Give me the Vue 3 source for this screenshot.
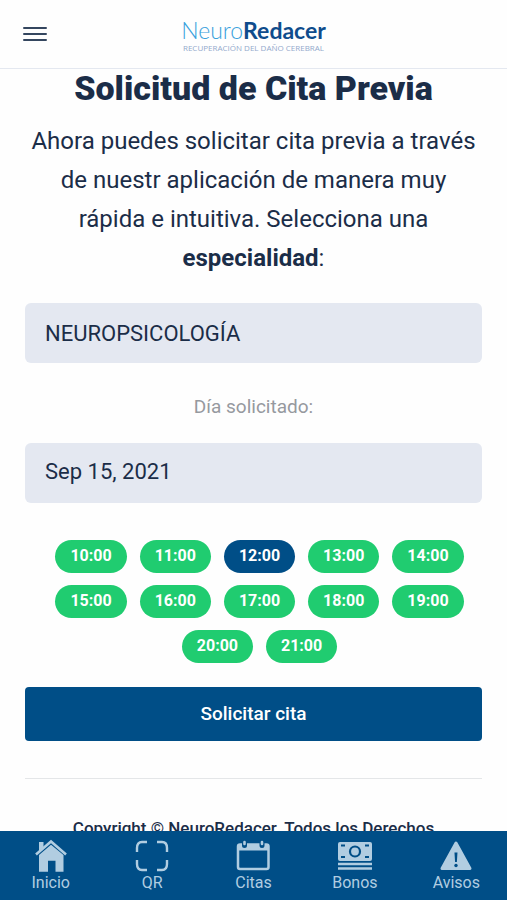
<script setup>
import { ref } from 'vue'

const specialty = ref('NEUROPSICOLOGÍA')
const day = ref('Sep 15, 2021')
const selected = ref('12:00')
const hours = Array.from({ length: 12 }, (_, i) => `${i + 10}:00`)
</script>

<template>
  <div class="app">
    <header class="topbar">
      <button class="menu" type="button" aria-label="Menú">
        <svg width="24" height="16" viewBox="0 0 24 16" aria-hidden="true">
          <path d="M1 2H23M1 8H23M1 14H23" stroke="#34465f" stroke-width="2" stroke-linecap="round" />
        </svg>
      </button>
      <a class="logo" href="#">
        <span class="brand"><span class="brand-light">Neuro</span><span class="brand-bold">Redacer</span></span>
        <span class="tagline">RECUPERACIÓN DEL DAÑO CEREBRAL</span>
      </a>
    </header>

    <main class="content">
      <h1>Solicitud de Cita Previa</h1>
      <p class="intro">
        <label for="specialty">Ahora puedes solicitar cita previa a través de nuestr aplicación de manera muy rápida e intuitiva. Selecciona una <strong>especialidad</strong>:</label>
      </p>
      <select id="specialty" v-model="specialty" class="field">
        <option>NEUROPSICOLOGÍA</option>
      </select>
      <label class="day-label" for="day">Día solicitado:</label>
      <input id="day" v-model="day" class="field date" type="text">
      <div class="hours">
        <button
          v-for="hour in hours"
          :key="hour"
          type="button"
          class="hour"
          :class="{ active: hour === selected }"
          :aria-pressed="hour === selected"
          @click="selected = hour"
        >{{ hour }}</button>
      </div>
      <button class="submit" type="button">Solicitar cita</button>
      <footer class="copyright">Copyright © NeuroRedacer. Todos los Derechos</footer>
    </main>

    <nav class="tabs">
      <a class="tab" href="#">
        <svg viewBox="0 0 34 34" aria-hidden="true">
          <path d="M5 3H9.500V9L5 12.500Z" fill="currentColor" />
          <path d="M2 15.500L17 2.500L32 15.500" fill="none" stroke="currentColor" stroke-width="2.600" />
          <path d="M5 16L17 5.800L29.500 16V32.700H21.500V21.700H14V32.700H5Z" fill="currentColor" />
        </svg>
        <span>Inicio</span>
      </a>
      <a class="tab" href="#">
        <svg viewBox="0 0 34 34" aria-hidden="true">
          <path d="M2 13V9Q2 3 7 3H12M22 3H27Q32 3 32 9V13M32 21V25Q32 31 27 31H22M12 31H7Q2 31 2 25V21" fill="none" stroke="currentColor" stroke-width="2.400" />
        </svg>
        <span>QR</span>
      </a>
      <a class="tab" href="#">
        <svg viewBox="0 0 34 34" aria-hidden="true">
          <rect x="2" y="5.500" width="30.500" height="24.500" rx="2" fill="none" stroke="currentColor" stroke-width="2.500" />
          <path d="M2 5H32V11.500H2Z" fill="currentColor" />
          <path d="M8.500 3V6.500M26 3V6.500" stroke="#004e87" stroke-width="5" stroke-linecap="round" />
          <path d="M8.500 3V5M26 3V5" stroke="currentColor" stroke-width="2.600" stroke-linecap="round" />
        </svg>
        <span>Citas</span>
      </a>
      <a class="tab" href="#">
        <svg viewBox="0 0 34 34" aria-hidden="true">
          <rect x="0" y="3" width="34" height="19" rx="2" fill="currentColor" />
          <path d="M3 6.500H7M27 6.500H31M3 18H7M27 18H31" stroke="#004e87" stroke-width="2" />
          <circle cx="17" cy="12.500" r="5" fill="none" stroke="#004e87" stroke-width="2.200" />
          <path d="M0 25H34M0 29.500H34" stroke="currentColor" stroke-width="2.400" />
        </svg>
        <span>Bonos</span>
      </a>
      <a class="tab" href="#">
        <svg viewBox="0 0 34 34" aria-hidden="true">
          <path d="M17 4L31 29.500H3Z" fill="currentColor" stroke="currentColor" stroke-width="3" stroke-linejoin="round" />
          <path d="M15.500 13.500H18.500L17.900 23H16.100Z" fill="#004e87" />
          <circle cx="17" cy="26.500" r="1.700" fill="#004e87" />
        </svg>
        <span>Avisos</span>
      </a>
    </nav>
  </div>
</template>

<style>
body {
  background: #fefefe;
}
</style>

<style scoped>
.app {
  display: flex;
  flex-direction: column;
  height: 100vh;
  color: #1b2d48;
  font-family: Roboto, sans-serif;
}

button,
select,
input {
  box-sizing: border-box;
  border: 0;
  margin: 0;
  font-family: inherit;
}

.topbar {
  display: grid;
  grid-template-columns: 1fr auto 1fr;
  align-items: center;
  flex: none;
  height: 68px;
  padding: 0 20px;
  border-bottom: 1px solid #e4e8f0;
}

.menu {
  justify-self: start;
  display: flex;
  padding: 3px;
  background: none;
}

.logo {
  display: flex;
  flex-direction: column;
  align-items: center;
  color: #004e87;
  text-decoration: none;
}

.brand {
  font-family: Lato, sans-serif;
  font-size: 23px;
  line-height: 28px;
}

.brand-light {
  color: #38a1dc;
  font-weight: 300;
}

.brand-bold {
  color: #0f4c8c;
  font-weight: 700;
}

.tagline {
  color: #93a9cc;
  font-family: "Open Sans", sans-serif;
  font-size: 8px;
  line-height: 8px;
}

.content {
  flex: 1;
  min-height: 0;
  display: flex;
  flex-direction: column;
  overflow-y: auto;
  scrollbar-width: none;
  padding: 0 25px;
}

h1 {
  margin: 0;
  font-size: 34px;
  font-weight: 900;
  line-height: 38px;
  text-align: center;
}

.intro {
  margin: 15px 0 25px;
  font-size: 24px;
  line-height: 39px;
  text-align: center;
}

.field {
  flex: none;
  appearance: none;
  width: 100%;
  height: 60px;
  padding: 0 20px;
  border-radius: 6px;
  background: #e4e8f1;
  color: inherit;
  font-size: 22px;
}

.field.date {
  padding-bottom: 4px;
}

.day-label {
  padding: 30px 0 22px;
  color: #96999f;
  font-size: 19px;
  line-height: 28px;
  text-align: center;
}

.hours {
  display: flex;
  flex-wrap: wrap;
  justify-content: center;
  gap: 12px 13px;
  padding: 37px 12px 24px 24px;
}

.hour {
  height: 33px;
  padding: 0 15px 2px;
  border-radius: 17px;
  background: #20cc70;
  color: #fff;
  font-size: 16px;
  font-weight: 700;
}

.hour.active {
  background: #004e87;
}

.submit {
  flex: none;
  height: 54px;
  padding-bottom: 2px;
  border-radius: 4px;
  background: #004e87;
  color: #fff;
  font-size: 19px;
  font-weight: 500;
}

.copyright {
  flex: none;
  margin-top: 37px;
  padding-top: 36px;
  border-top: 1px solid #e4e6e8;
  font-size: 17px;
  font-weight: 500;
  line-height: 26px;
  text-align: center;
}

.tabs {
  display: grid;
  grid-template-columns: repeat(5, 1fr);
  flex: none;
  height: 69px;
  background: #004e87;
}

.tab {
  display: flex;
  flex-direction: column;
  align-items: center;
  gap: 1px;
  padding-top: 8px;
  color: #b1cde1;
  font-size: 16px;
  line-height: 18px;
  text-decoration: none;
}

.tab svg {
  width: 34px;
  height: 34px;
}
</style>
